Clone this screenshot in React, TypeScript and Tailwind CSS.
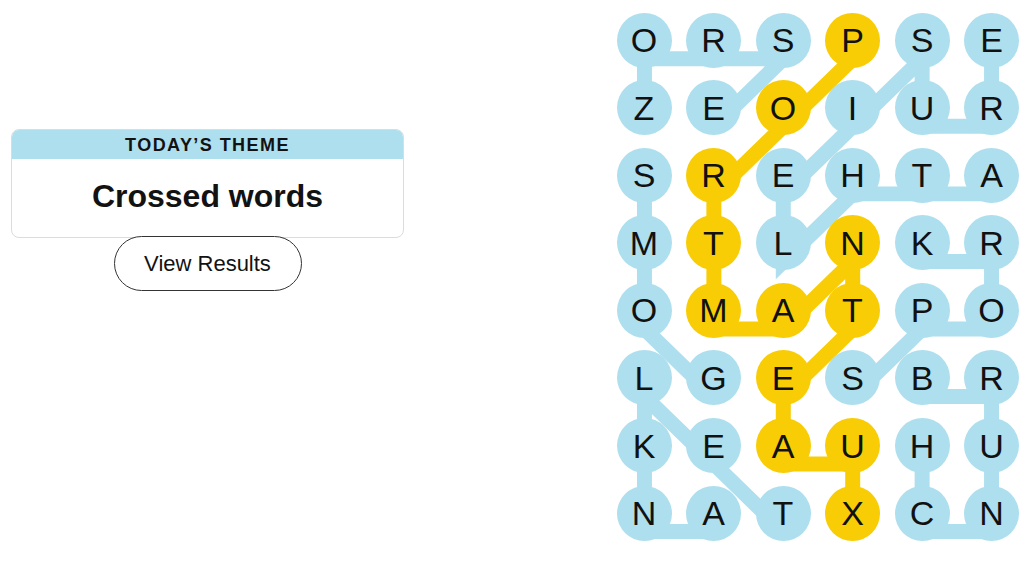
import React from "react";

const rows = [
  "ORSPSE",
  "ZEOIUR",
  "SREHTA",
  "MTLNKR",
  "OMATPO",
  "LGESBR",
  "KEAUHU",
  "NATXCN",
];

// grid geometry (cell 55px, column pitch 69.5, row pitch 67.6)
const cx = (c: number) => 27.5 + c * 69.5;
const cy = (r: number) => 27.5 + r * 67.6 + 18;

type Cell = [number, number];

const found: { path: Cell[]; span?: boolean }[] = [
  // ZORSE
  { path: [[1, 0], [0, 0], [0, 1], [0, 2], [1, 1]] },
  // SMOG
  { path: [[2, 0], [3, 0], [4, 0], [5, 1]] },
  // ATHLEISURE
  { path: [[2, 5], [2, 4], [2, 3], [3, 2], [2, 2], [1, 3], [0, 4], [1, 4], [1, 5], [0, 5]] },
  // SPORK
  { path: [[5, 3], [4, 4], [4, 5], [3, 5], [3, 4]] },
  // BRUNCH
  { path: [[5, 4], [5, 5], [6, 5], [7, 5], [7, 4], [6, 4]] },
  // ANKLET
  { path: [[7, 1], [7, 0], [6, 0], [5, 0], [6, 1], [7, 2]] },
  // PORTMANTEAUX
  {
    span: true,
    path: [[0, 3], [1, 2], [2, 1], [3, 1], [4, 1], [4, 2], [3, 3], [4, 3], [5, 2], [6, 2], [6, 3], [7, 3]],
  },
];

const spanCells = new Set(found.filter((f) => f.span).flatMap((f) => f.path.map(([r, c]) => `${r}-${c}`)));

const Board = () => {
  return (
    <div className="relative">
      <svg className="absolute inset-0 w-full h-full" viewBox="0 0 403 528">
        {found.map((f, i) => (
          <polyline
            key={i}
            points={f.path.map(([r, c]) => `${cx(c)},${cy(r)}`).join(" ")}
            fill="none"
            stroke={f.span ? "#f8cd05" : "#aedfee"}
            strokeWidth={15}
            strokeLinejoin="miter"
            strokeLinecap="butt"
          />
        ))}
      </svg>
      <div className="relative grid grid-cols-[repeat(6,55px)] gap-x-[14.5px] gap-y-[12.6px]">
        {rows.map((row, r) =>
          row.split("").map((letter, c) => (
            <div
              key={`${r}-${c}`}
              className={`w-[55px] h-[55px] rounded-full flex items-center justify-center text-[34px] leading-none text-[#111] ${
                spanCells.has(`${r}-${c}`) ? "bg-[#f8cd05]" : "bg-[#aedfee]"
              }`}
            >
              {letter}
            </div>
          ))
        )}
      </div>
    </div>
  );
};

export default function App() {
  return (
    <div className="w-[1027px] h-[578px] bg-white flex font-['Liberation_Sans',Arial,sans-serif] overflow-hidden">
      <div className="ml-[11px] mt-[129px] w-[393px] flex flex-col items-center">
        <div className="w-full rounded-lg border border-[#dcdcdc] overflow-hidden">
          <div className="bg-[#aedfee] h-[29px] flex items-center justify-center text-[18px] font-bold tracking-[0.08em] text-[#121212] pt-[2px]">
            TODAY’S THEME
          </div>
          <div className="h-[78px] flex items-center justify-center text-[32px] font-bold text-[#121212] pb-[4px]">
            Crossed words
          </div>
        </div>
        <button className="mt-[-2px] w-[188px] h-[55px] rounded-full border border-[#333] bg-white text-[22px] text-[#121212]">
          View Results
        </button>
      </div>
      <div className="ml-auto mr-[8px] mt-[12.5px]">
        <Board />
      </div>
    </div>
  );
}
